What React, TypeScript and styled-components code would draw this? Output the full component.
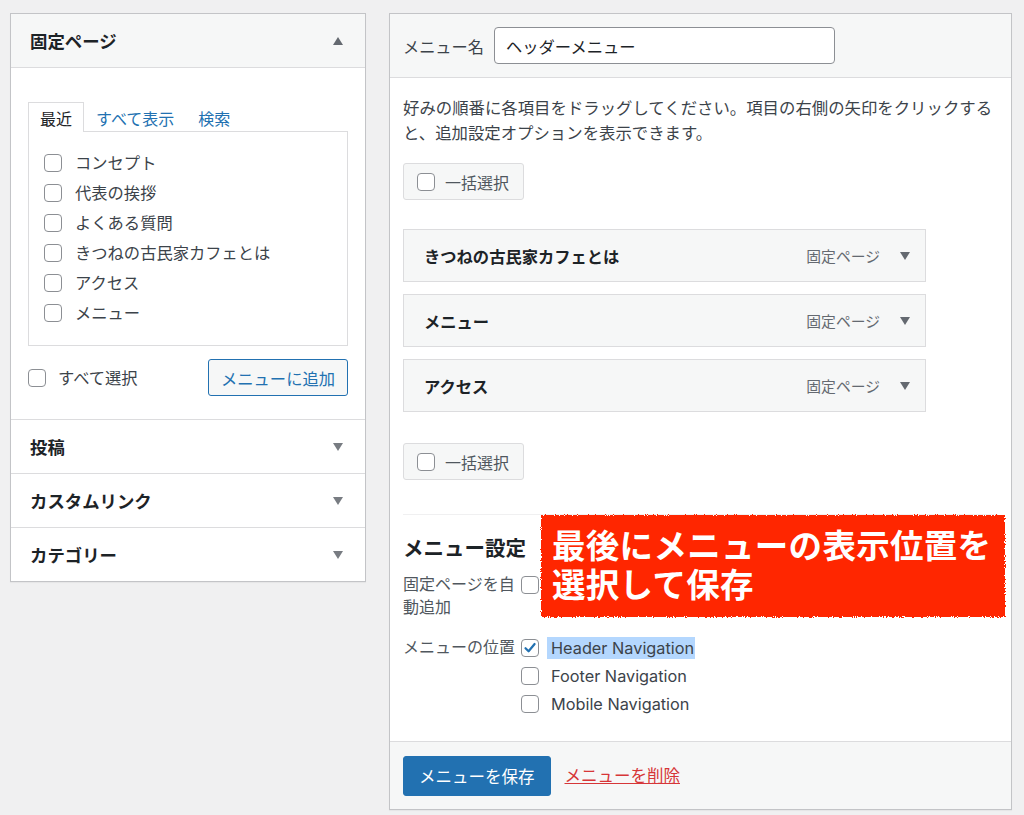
import * as React from 'react';
import styled, { createGlobalStyle } from 'styled-components';

const GlobalStyle = createGlobalStyle`
  body {
    margin: 0;
    background: #f0f0f1;
    font-family: "Inter", "Noto Sans CJK JP", sans-serif;
    color: #3c434a;
  }
`;

const Page = styled.div`
  display: flex;
  align-items: flex-start;
  gap: 23px;
  padding: 13px 0 0 10px;
  width: 1024px;
  height: 815px;
  box-sizing: border-box;
  overflow: hidden;
`;

const Panel = styled.div<{ $width: number }>`
  width: ${(p) => p.$width}px;
  box-sizing: border-box;
  background: #fff;
  border: 1px solid #c3c4c7;
  box-shadow: 0 1px 1px rgba(0, 0, 0, 0.04);
`;

const SectionHead = styled.div<{ $open?: boolean }>`
  display: flex;
  align-items: center;
  justify-content: space-between;
  height: 54px;
  box-sizing: border-box;
  padding: 0 22px 0 19px;
  background: ${(p) => (p.$open ? '#f6f7f7' : '#fff')};
  border-top: ${(p) => (p.$open ? 'none' : '1px solid #dcdcde')};
  border-bottom: ${(p) => (p.$open ? '1px solid #dcdcde' : 'none')};
  font-size: 17.4px;
  font-weight: 700;
  color: #1d2327;
`;

const Arrow = styled.span<{ $up?: boolean; $color?: string }>`
  width: 0;
  height: 0;
  border-left: 5px solid transparent;
  border-right: 5px solid transparent;
  ${(p) =>
    p.$up
      ? `border-bottom: 8px solid ${p.$color || '#646970'};`
      : `border-top: 8px solid ${p.$color || '#787c82'};`}
`;

const SectionBody = styled.div`
  padding: 34px 17px 23px 17px;
`;

const Tabs = styled.div`
  display: flex;
  align-items: flex-end;
  font-size: 16px;
`;

const Tab = styled.div<{ $active?: boolean }>`
  height: 30px;
  box-sizing: border-box;
  display: flex;
  align-items: center;
  padding: 0 11px;
  color: ${(p) => (p.$active ? '#1d2327' : '#2271b1')};
  background: ${(p) => (p.$active ? '#fff' : 'transparent')};
  border: ${(p) => (p.$active ? '1px solid #dcdcde' : '1px solid transparent')};
  border-bottom: none;
  margin-bottom: -1px;
  position: relative;
`;

const TabPanel = styled.div`
  border: 1px solid #dcdcde;
  padding: 22px 15px 23px 15px;
  display: flex;
  flex-direction: column;
  gap: 12px;
`;

const CheckRow = styled.label<{ $gap?: number }>`
  display: flex;
  align-items: center;
  gap: ${(p) => p.$gap ?? 13}px;
  height: 18px;
  font-size: 16.3px;
  line-height: 18px;
  color: #3c434a;
`;

const Box = styled.span`
  width: 18px;
  height: 18px;
  flex: none;
  box-sizing: border-box;
  border: 1px solid #8c8f94;
  border-radius: 4px;
  background: #fff;
  display: inline-flex;
  align-items: center;
  justify-content: center;
`;

const Check = ({ checked }: { checked?: boolean }) => (
  <Box>
    {checked && (
      <svg width="16" height="16" viewBox="0 0 16 16">
        <path d="M3.5 8.2 L6.6 11.3 L12.6 4" fill="none" stroke="#2271b1" strokeWidth="2.2" strokeLinecap="round" strokeLinejoin="round" />
      </svg>
    )}
  </Box>
);

const ActionRow = styled.div`
  display: flex;
  align-items: center;
  justify-content: space-between;
  margin-top: 13px;
`;

const OutlineButton = styled.button`
  height: 37px;
  padding: 0 12px;
  font-family: inherit;
  font-size: 16.3px;
  color: #2271b1;
  background: #f6f7f7;
  border: 1px solid #2271b1;
  border-radius: 3px;
`;

const HeaderBar = styled.div`
  display: flex;
  align-items: center;
  gap: 10px;
  height: 63px;
  padding: 0 13px;
  background: #f6f7f7;
  border-bottom: 1px solid #dcdcde;
  font-size: 16.2px;
`;

const NameInput = styled.div`
  width: 341px;
  height: 37px;
  box-sizing: border-box;
  border: 1px solid #8c8f94;
  border-radius: 4px;
  background: #fff;
  display: flex;
  align-items: center;
  padding: 0 11px;
  font-size: 16.3px;
  color: #1d2327;
`;

const MenuBody = styled.div`
  padding: 18px 13px 0 13px;
`;

const Description = styled.p`
  margin: 0;
  font-size: 16.4px;
  line-height: 25px;
  color: #3c434a;
`;

const BulkButton = styled.div<{ $top: number }>`
  display: inline-flex;
  align-items: center;
  gap: 10px;
  margin-top: ${(p) => p.$top}px;
  height: 37px;
  box-sizing: border-box;
  padding: 0 14px 0 13px;
  background: #f6f7f7;
  border: 1px solid #dcdcde;
  border-radius: 3px;
  font-size: 16px;
  color: #50575e;
`;

const ItemList = styled.div`
  display: flex;
  flex-direction: column;
  gap: 12px;
  margin-top: 29px;
  width: 523px;
`;

const Item = styled.div`
  height: 53px;
  box-sizing: border-box;
  display: flex;
  align-items: center;
  padding: 0 15px 0 20px;
  background: #f6f7f7;
  border: 1px solid #dcdcde;
  font-size: 16.3px;
  font-weight: 700;
  color: #1d2327;
`;

const ItemTitle = styled.span`
  flex: 1;
`;

const ItemType = styled.span`
  font-size: 14.8px;
  font-weight: 400;
  color: #646970;
  margin-right: 20px;
`;

const Settings = styled.div`
  position: relative;
  margin-top: 34px;
  border-top: 1px solid #f0f0f1;
  padding-bottom: 28px;
`;

const SettingsTitle = styled.h3`
  margin: 20px 0 0;
  font-size: 20.5px;
  font-weight: 700;
  color: #1d2327;
  line-height: 28px;
`;

const SettingRow = styled.div<{ $top: number }>`
  display: grid;
  grid-template-columns: 118px 1fr;
  margin-top: ${(p) => p.$top}px;
  font-size: 16px;
  line-height: 23px;
  color: #50575e;
`;

const FieldStack = styled.div`
  display: flex;
  flex-direction: column;
  gap: 10px;
  padding-top: 3px;
`;

const Highlight = styled.span<{ $on?: boolean }>`
  background: ${(p) => (p.$on ? '#b4d7fe' : 'transparent')};
  padding: 2px 1px 2px 4px;
  margin-left: -4px;
  font-size: 16.3px;
  line-height: 18px;
  color: #3c434a;
`;

const Callout = styled.div`
  position: absolute;
  left: 138px;
  top: 0;
  width: 464px;
  height: 102px;
  box-sizing: border-box;
  padding: 12px 0 0 11px;
  color: #fff;
  font-size: 33.5px;
  font-weight: 700;
  line-height: 39px;
  letter-spacing: 0.3px;
`;

const CalloutPaper = styled.div`
  position: absolute;
  inset: 0;
  background: #ff2500;
  filter: url(#rough-edge);
`;

const CalloutText = styled.div`
  position: relative;
`;

const Footer = styled.div`
  display: flex;
  align-items: flex-start;
  gap: 14px;
  height: 68px;
  box-sizing: border-box;
  padding: 14px 13px 0 13px;
  background: #f6f7f7;
  border-top: 1px solid #dcdcde;
`;

const PrimaryButton = styled.button`
  height: 40px;
  padding: 0 15px;
  font-family: inherit;
  font-size: 16.5px;
  color: #fff;
  background: #2271b1;
  border: 1px solid #2271b1;
  border-radius: 3px;
`;

const DangerLink = styled.a`
  font-size: 16.5px;
  line-height: 40px;
  color: #d63638;
  text-decoration: underline;
`;

const pages = ['コンセプト', '代表の挨拶', 'よくある質問', 'きつねの古民家カフェとは', 'アクセス', 'メニュー'];
const menuItems = ['きつねの古民家カフェとは', 'メニュー', 'アクセス'];
const locations = [
  { label: 'Header Navigation', checked: true },
  { label: 'Footer Navigation', checked: false },
  { label: 'Mobile Navigation', checked: false },
];

export default function App() {
  return (
    <>
      <GlobalStyle />
      <svg width="0" height="0" style={{ position: 'absolute' }}>
        <filter id="rough-edge">
          <feTurbulence type="fractalNoise" baseFrequency="0.9" numOctaves="2" seed="3" />
          <feDisplacementMap in="SourceGraphic" scale="4" />
        </filter>
      </svg>
      <Page>
        <Panel $width={356}>
          <SectionHead $open>
            固定ページ
            <Arrow $up />
          </SectionHead>
          <SectionBody>
            <Tabs>
              <Tab $active>最近</Tab>
              <Tab>すべて表示</Tab>
              <Tab>検索</Tab>
            </Tabs>
            <TabPanel>
              {pages.map((p) => (
                <CheckRow key={p}>
                  <Check />
                  {p}
                </CheckRow>
              ))}
            </TabPanel>
            <ActionRow>
              <CheckRow $gap={12}>
                <Check />
                すべて選択
              </CheckRow>
              <OutlineButton>メニューに追加</OutlineButton>
            </ActionRow>
          </SectionBody>
          <SectionHead>
            投稿
            <Arrow />
          </SectionHead>
          <SectionHead>
            カスタムリンク
            <Arrow />
          </SectionHead>
          <SectionHead>
            カテゴリー
            <Arrow />
          </SectionHead>
        </Panel>

        <Panel $width={623}>
          <HeaderBar>
            メニュー名
            <NameInput>ヘッダーメニュー</NameInput>
          </HeaderBar>
          <MenuBody>
            <Description>
              好みの順番に各項目をドラッグしてください。項目の右側の矢印をクリックすると、追加設定オプションを表示できます。
            </Description>
            <BulkButton $top={17}>
              <Check />
              一括選択
            </BulkButton>
            <ItemList>
              {menuItems.map((m) => (
                <Item key={m}>
                  <ItemTitle>{m}</ItemTitle>
                  <ItemType>固定ページ</ItemType>
                  <Arrow $color="#646970" />
                </Item>
              ))}
            </ItemList>
            <BulkButton $top={31}>
              <Check />
              一括選択
            </BulkButton>
            <Settings>
              <SettingsTitle>メニュー設定</SettingsTitle>
              <SettingRow $top={10}>
                <span>
                  固定ページを自
                  <br />
                  動追加
                </span>
                <FieldStack>
                  <Check />
                </FieldStack>
              </SettingRow>
              <SettingRow $top={17}>
                <span>メニューの位置</span>
                <FieldStack>
                  {locations.map((l) => (
                    <CheckRow key={l.label} $gap={12}>
                      <Check checked={l.checked} />
                      <Highlight $on={l.checked}>{l.label}</Highlight>
                    </CheckRow>
                  ))}
                </FieldStack>
              </SettingRow>
              <Callout>
                <CalloutPaper />
                <CalloutText>
                  最後にメニューの表示位置を
                  <br />
                  選択して保存
                </CalloutText>
              </Callout>
            </Settings>
          </MenuBody>
          <Footer>
            <PrimaryButton>メニューを保存</PrimaryButton>
            <DangerLink>メニューを削除</DangerLink>
          </Footer>
        </Panel>
      </Page>
    </>
  );
}
